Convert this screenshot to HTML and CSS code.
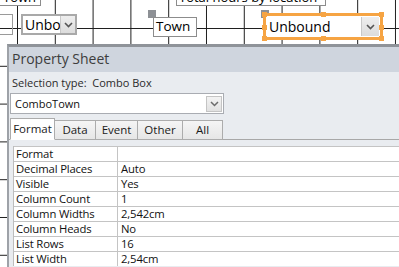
FILE: index.html
```html
<!DOCTYPE html>
<html>
<head>
<meta charset="utf-8">
<title>Property Sheet</title>
<link rel="stylesheet" href="styles.css">
</head>
<body>

<div class="design">
	<!-- controls on the form design surface -->
	<div class="ctl ctl-label ctl-loc">Town</div>
	<div class="ctl ctl-label ctl-total">Total hours by location</div>
	<div class="ctl ctl-box ctl-left"></div>
	<div class="ctl ctl-combo ctl-unbo">
		<span class="ctl-text">Unbound</span>
		<span class="ctl-drop"><svg width="9" height="6" viewBox="0 0 9 6"><path d="M1 1 L4.5 4.5 L8 1" fill="none" stroke="#555" stroke-width="1.6"/></svg></span>
	</div>
	<div class="handle handle-town"></div>
	<div class="ctl ctl-label ctl-town">Town</div>
	<div class="handle handle-sel"></div>
	<div class="ctl ctl-selected">
		<div class="ctl-combo ctl-inner">
			<span class="ctl-text">Unbound</span>
			<span class="ctl-drop"><svg width="9" height="6" viewBox="0 0 9 6"><path d="M1 1 L4.5 4.5 L8 1" fill="none" stroke="#555" stroke-width="1.6"/></svg></span>
		</div>
		<span class="dot dot-tl"></span><span class="dot dot-tm"></span><span class="dot dot-tr"></span>
		<span class="dot dot-bl"></span><span class="dot dot-bm"></span><span class="dot dot-br"></span>
		<span class="dot dot-ml"></span><span class="dot dot-mr"></span>
	</div>
</div>

<div class="sheet">
	<div class="sheet-title">Property Sheet</div>
	<div class="sheet-body">
		<div class="sel-type">Selection type:&nbsp; Combo Box</div>
		<div class="sel-combo">
			<span class="sel-combo-text">ComboTown</span>
			<span class="sel-combo-btn"><svg width="9" height="6" viewBox="0 0 9 6"><path d="M1 1 L4.5 4.5 L8 1" fill="none" stroke="#6b6b6b" stroke-width="1.5"/></svg></span>
		</div>
		<div class="tabs">
			<div class="tab tab-active">Format</div>
			<div class="tab">Data</div>
			<div class="tab">Event</div>
			<div class="tab">Other</div>
			<div class="tab tab-all">All</div>
		</div>
		<div class="props">
			<div class="row"><span class="key">Format</span><span class="val"></span></div>
			<div class="row"><span class="key">Decimal Places</span><span class="val">Auto</span></div>
			<div class="row"><span class="key">Visible</span><span class="val">Yes</span></div>
			<div class="row"><span class="key">Column Count</span><span class="val">1</span></div>
			<div class="row"><span class="key">Column Widths</span><span class="val">2,542cm</span></div>
			<div class="row"><span class="key">Column Heads</span><span class="val">No</span></div>
			<div class="row"><span class="key">List Rows</span><span class="val">16</span></div>
			<div class="row"><span class="key">List Width</span><span class="val">2,54cm</span></div>
		</div>
	</div>
</div>

</body>
</html>
```
FILE: styles.css
```css
html,body{height:100%;}
body{margin:0;padding:0;overflow:hidden;background:#fff;font-family:"Open Sans","Noto Sans",sans-serif;}

.design{
	position:relative;width:399px;height:267px;overflow:hidden;
	background-color:#fff;
	background-image:
		linear-gradient(to right,#1e1e1e 1px,transparent 1px),
		linear-gradient(to bottom,#1e1e1e 1px,transparent 1px);
	background-size:37.8px 37.8px;
	background-position:17px 28px;
}

.ctl{position:absolute;box-sizing:border-box;font-family:"Open Sans","Noto Sans",sans-serif;font-size:13px;color:#000;}
.ctl-label{background:#fff;border:1px solid #8c8c8c;line-height:17px;padding-left:2px;white-space:nowrap;overflow:hidden;}
.ctl-loc{left:-20px;top:-12px;width:61px;height:18px;text-align:right;padding-right:4px;}
.ctl-total{left:176px;top:-12px;width:150px;height:18px;}
.ctl-box{left:-10px;top:14px;width:23px;height:21px;border:1px solid #9a9a9a;}
.ctl-town{left:153px;top:17px;width:44px;height:20px;font-size:13.5px;}

.ctl-combo{display:flex;align-items:center;background:#fff;border:2px solid #a9a9a9;overflow:hidden;}
.ctl-text{flex:1;padding-left:2px;white-space:nowrap;overflow:hidden;line-height:17px;font-size:14px;}
.ctl-drop{width:14px;height:100%;background:linear-gradient(#eee,#dcdcdc);border-left:1px solid #c8c8c8;display:flex;align-items:center;justify-content:center;}
.ctl-unbo{left:21px;top:14px;width:56px;height:21px;}

.handle{position:absolute;width:8px;height:8px;background:#8d9095;}
.handle-town{left:148px;top:10px;}
.handle-sel{left:261px;top:10px;}

.ctl-selected{left:263px;top:13px;width:120px;height:27px;border:3px solid #f6a443;background:#fff;padding:1px;}
.ctl-inner{height:100%;border:none;}
.ctl-inner .ctl-drop{width:17px;}
.dot{position:absolute;width:5px;height:5px;background:#f6a443;}
.dot-tl{left:-4px;top:-4px;}
.dot-tm{left:55px;top:-4px;}
.dot-tr{right:-4px;top:-4px;}
.dot-bl{left:-4px;bottom:-4px;}
.dot-bm{left:55px;bottom:-4px;}
.dot-br{right:-4px;bottom:-4px;}
.dot-ml{left:-4px;top:9px;}
.dot-mr{right:-4px;top:9px;}

/* property sheet window */
.sheet{
	position:absolute;left:7px;top:44px;width:392px;height:223px;overflow:hidden;
	border-top:3px solid #8f9399;border-left:2px solid #9ea2a8;
	background:#e9ecf0;color:#262626;
}
.sheet-title{height:25px;line-height:24px;background:#cfd5de;font-size:14px;padding-left:3px;color:#3d3d3d;}
.sheet-body{padding:0 0 0 1px;font-size:11px;}
.sel-type{height:21px;line-height:21px;padding-left:2px;color:#2b2b2b;}
.sel-combo{
	display:flex;align-items:center;box-sizing:border-box;
	width:214px;height:21px;background:#fff;border:1px solid #a9acb2;
}
.sel-combo-text{flex:1;padding-left:4px;font-size:11px;color:#111;}
.sel-combo-btn{
	width:16px;height:16px;margin-right:1px;box-sizing:border-box;
	border:1px solid #c4c4c4;background:linear-gradient(#f3f3f3,#e1e1e1);
	display:flex;align-items:center;justify-content:center;
}
.tabs{display:flex;align-items:flex-end;height:25px;border-bottom:1px solid #a8a8a8;margin-left:-1px;}
.tab{
	box-sizing:border-box;height:20px;margin-bottom:-1px;line-height:18px;
	border:1px solid #acacac;border-left:none;background:linear-gradient(#f5f5f5,#e6e6e6);
	font-size:11.5px;color:#1a1a1a;text-align:center;
}
.tab:nth-child(2){width:41px;}
.tab:nth-child(3){width:42px;}
.tab:nth-child(4){width:45px;}
.tab-all{width:40px;}
.tab-active{width:45px;height:22px;background:#fff;border-left:1px solid #acacac;border-bottom-color:#fff;margin-left:1px;line-height:20px;}

.props{margin-top:6px;margin-left:3px;border-left:1px solid #bdbdbd;background:#fff;}
.row{display:flex;box-sizing:border-box;height:15px;border-top:1px solid #c4c4c4;font-size:11.3px;letter-spacing:-0.15px;line-height:14px;color:#111;}
.key{width:101px;padding-left:2px;border-right:1px solid #c4c4c4;white-space:nowrap;}
.val{padding-left:3px;}
```
